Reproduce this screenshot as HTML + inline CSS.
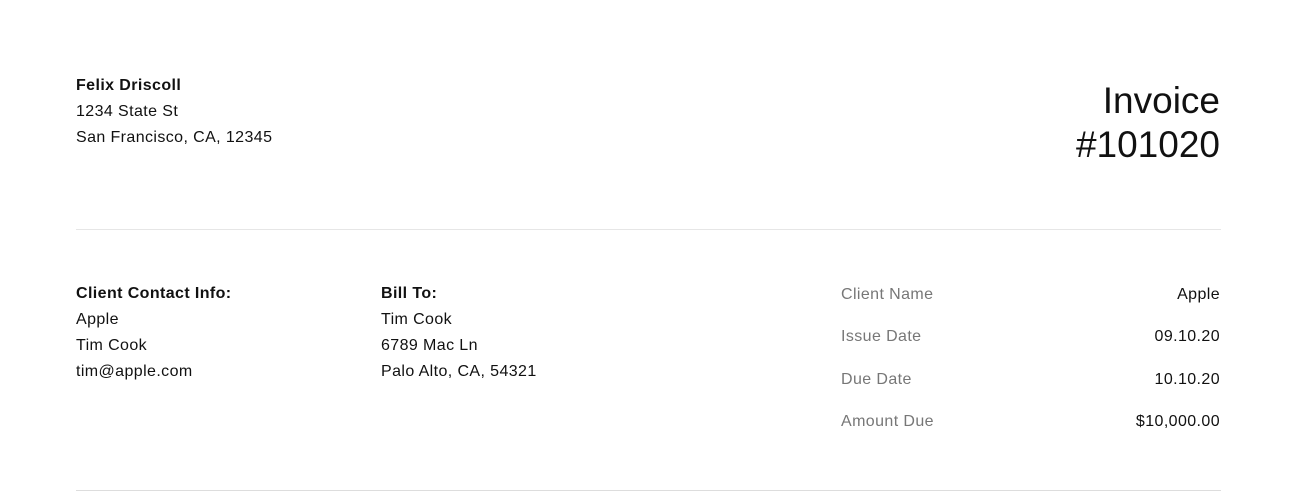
<!DOCTYPE html>
<html><head><style>
body{margin:0;width:1297px;height:501px;background:#fff;font-family:"Liberation Sans",sans-serif;color:#111;position:relative;overflow:hidden;font-size:16px;letter-spacing:0.4px;}
.a{position:absolute;line-height:26px;}
.b{font-weight:bold;}
.inv{position:absolute;right:77px;top:79px;text-align:right;font-size:37px;line-height:44px;letter-spacing:0;}
.hr{position:absolute;left:76px;width:1145px;height:1px;background:#e6e6e6;}
.lbl{position:absolute;left:841px;color:#777;line-height:26px;}
.val{position:absolute;right:77px;line-height:26px;}
</style></head><body>
<div class="a" style="left:76px;top:73px"><span class="b">Felix Driscoll</span><br>1234 State St<br>San Francisco, CA, 12345</div>
<div class="inv">Invoice<br>#101020</div>
<div class="hr" style="top:229px"></div>
<div class="a" style="left:76px;top:281px"><span class="b">Client Contact Info:</span><br>Apple<br>Tim Cook<br>tim@apple.com</div>
<div class="a" style="left:381px;top:281px"><span class="b">Bill To:</span><br>Tim Cook<br>6789 Mac Ln<br>Palo Alto, CA, 54321</div>
<div class="lbl" style="top:282px">Client Name</div><div class="val" style="top:282px">Apple</div>
<div class="lbl" style="top:324px">Issue Date</div><div class="val" style="top:324px">09.10.20</div>
<div class="lbl" style="top:367px">Due Date</div><div class="val" style="top:367px">10.10.20</div>
<div class="lbl" style="top:409px">Amount Due</div><div class="val" style="top:409px">$10,000.00</div>
<div class="hr" style="top:490px;background:#ddd"></div>
</body></html>
